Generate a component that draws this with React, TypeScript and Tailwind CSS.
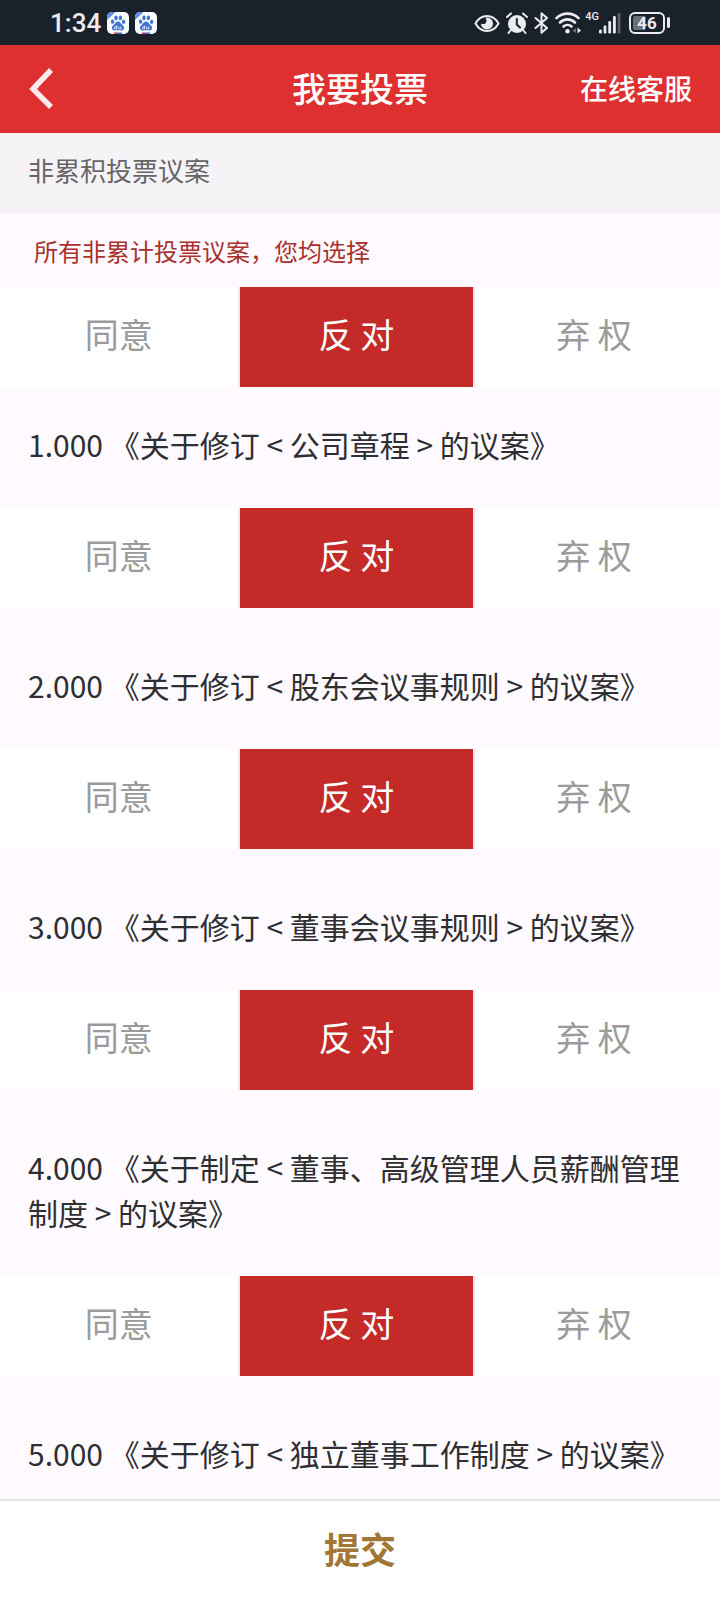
import { useState } from "react";

type Choice = "agree" | "against" | "abstain";

const OPTIONS: { value: Choice; label: string }[] = [
  { value: "agree", label: "同意" },
  { value: "against", label: "反 对" },
  { value: "abstain", label: "弃 权" },
];

const PROPOSALS = [
  "1.000 《关于修订 < 公司章程 > 的议案》",
  "2.000 《关于修订 < 股东会议事规则 > 的议案》",
  "3.000 《关于修订 < 董事会议事规则 > 的议案》",
  "4.000 《关于制定 < 董事、高级管理人员薪酬管理制度 > 的议案》",
  "5.000 《关于修订 < 独立董事工作制度 > 的议案》",
];

function PawIcon() {
  return (
    <svg width="22" height="22" viewBox="0 0 22 22" aria-hidden="true">
      <clipPath id="paw-clip">
        <rect width="22" height="22" rx="5" />
      </clipPath>
      <g clipPath="url(#paw-clip)">
        <rect width="22" height="22" fill="#fbfcff" />
        <path d="M0 0h8.500L0 8z" fill="#5b8fe4" />
        <g fill="#3d74d6">
          <ellipse cx="5.600" cy="9.600" rx="1.700" ry="2.200" transform="rotate(-12 5.600 9.600)" />
          <ellipse cx="9" cy="5.900" rx="1.700" ry="2.300" />
          <ellipse cx="13.400" cy="5.900" rx="1.700" ry="2.300" transform="rotate(8 13.400 5.900)" />
          <ellipse cx="16.600" cy="9.800" rx="1.700" ry="2.100" transform="rotate(12 16.600 9.800)" />
          <path d="M11 9.500c2.200 0 2.800 2 4.200 3.200 1.500 1.300 2.200 2.300 1.800 3.900-.4 1.700-2 2.200-3.500 1.900-1.800-.3-3.200-.3-5 0-1.500.3-3.100-.2-3.500-1.900-.4-1.600.3-2.600 1.800-3.900 1.400-1.200 2-3.200 4.200-3.200z" />
        </g>
        <path d="M9.600 13.500v3.500H8.400a1.100 1.100 0 010-2.200h1.200M11.600 14.500v1.700q0 .8.800.8h1.400v-2.500" fill="none" stroke="#fff" strokeWidth=".8" />
        <path d="M7 20.500h4V22H7z" fill="#d8383f" />
        <path d="M11 20.500h4V22h-4z" fill="#3b6fe0" />
      </g>
    </svg>
  );
}

function EyeIcon() {
  return (
    <svg width="26" height="22" viewBox="0 0 26 22" aria-hidden="true">
      <path d="M1.500 11.500C4 7 8 4 13 4s9 3 11.500 7.500C22 16 18 19 13 19S4 16 1.500 11.500z" fill="none" stroke="currentColor" strokeWidth="2" />
      <path d="M13 5.500a6 6 0 11-6 6c1.600 1.100 4.600.6 5.300-1.600.4-1.400 0-2.600-.9-4.100z" fill="currentColor" />
    </svg>
  );
}

function AlarmIcon() {
  return (
    <svg width="22" height="22" viewBox="0 0 22 22" aria-hidden="true">
      <circle cx="11" cy="12" r="9" fill="currentColor" />
      <path d="M1 5l4-3.500M21 5l-4-3.500M4.500 18.500l-2 2.500M17.500 18.500l2 2.500" stroke="currentColor" strokeWidth="2" strokeLinecap="round" />
      <path d="M10.800 7v5.500l3.200 3" fill="none" stroke="#19222b" strokeWidth="2" strokeLinecap="round" />
    </svg>
  );
}

function BluetoothIcon() {
  return (
    <svg width="15" height="22" viewBox="0 0 15 22" aria-hidden="true">
      <path d="M1.500 6l11.500 10-5.500 4.800V1.200L13 6 1.500 16" fill="none" stroke="currentColor" strokeWidth="2" strokeLinejoin="round" strokeLinecap="round" />
    </svg>
  );
}

function WifiIcon() {
  return (
    <svg width="26" height="22" viewBox="0 0 26 22" aria-hidden="true">
      <g fill="none" stroke="currentColor" strokeWidth="2.600" strokeLinecap="round">
        <path d="M1.500 6.200a15.500 15.500 0 0122 0" />
        <path d="M5 10.500a10.500 10.500 0 0115 0" />
        <path d="M8.500 14.500a6 6 0 018 0" />
      </g>
      <circle cx="12.500" cy="19.200" r="2.200" fill="currentColor" />
      <path d="M21 16l-3.500 2.500L21 21z" fill="#69717a" />
      <path d="M22.500 15.500l3.500 3-3.500 3z" fill="currentColor" />
    </svg>
  );
}

function SignalIcon() {
  return (
    <svg width="22" height="22" viewBox="0 0 22 22" aria-hidden="true">
      <g fill="currentColor">
        <rect y="17.500" width="2.800" height="4" rx="1.200" />
        <rect x="4.600" y="13.500" width="2.800" height="8" rx="1.200" />
        <rect x="9.300" y="9" width="2.800" height="12.500" rx="1.200" />
        <rect x="14" y="4" width="2.800" height="17.500" rx="1.200" />
      </g>
      <rect x="18.700" y="1" width="2.800" height="20.500" rx="1.200" fill="#59616a" />
    </svg>
  );
}

function StatusBar() {
  return (
    <div className="flex h-[45px] shrink-0 items-center justify-between bg-[#19222b] px-[50px] font-['Roboto',sans-serif] text-[#ebebf0]">
      <div className="flex items-center gap-[6px]">
        <span className="text-[26px] leading-[30px] font-medium">1:34</span>
        <PawIcon />
        <PawIcon />
      </div>
      <div className="flex items-center">
        <div className="flex items-center gap-[6px]">
          <EyeIcon />
          <AlarmIcon />
          <BluetoothIcon />
          <WifiIcon />
        </div>
        <span className="mb-3 ml-1 text-[11px] leading-[12px] font-medium">4G</span>
        <SignalIcon />
        <div className="ml-2 flex items-center gap-[2px]">
          <div className="flex h-[22px] w-[36px] items-center justify-center rounded-[6px] border-2 border-current bg-linear-to-r from-[#69717a] from-45% to-transparent to-45% bg-clip-content p-[2px]">
            <span className="text-[17px] leading-[16px] font-bold">46</span>
          </div>
          <div className="h-[11px] w-[3px] rounded-full bg-current" />
        </div>
      </div>
    </div>
  );
}

interface VoteOptionsProps {
  label: string;
  value: Choice;
  onChange: (value: Choice) => void;
}

function VoteOptions({ label, value, onChange }: VoteOptionsProps) {
  return (
    <div role="group" aria-label={label} className="grid h-[100px] grid-cols-[33%_33%_33%] bg-white">
      {OPTIONS.map((option) => (
        <button
          key={option.value}
          type="button"
          aria-pressed={option.value === value}
          onClick={() => onChange(option.value)}
          className={`border-x-2 pb-[6px] text-[34px] leading-[48px] ${
            option.value === value
              ? "border-[#fbe4e6] bg-[#c42a28] bg-clip-padding text-white"
              : "border-transparent text-[#9b9b9b]"
          }`}
        >
          {option.label}
        </button>
      ))}
    </div>
  );
}

export default function App() {
  const [votes, setVotes] = useState<Choice[]>(PROPOSALS.map(() => "against"));
  const [all, setAll] = useState<Choice>("against");

  const voteAll = (value: Choice) => {
    setAll(value);
    setVotes(PROPOSALS.map(() => value));
  };

  const voteOne = (index: number, value: Choice) => {
    setVotes(votes.map((vote, i) => (i === index ? value : vote)));
  };

  return (
    <div lang="zh-CN" className="flex h-screen flex-col bg-[#fefaff] font-['Noto_Sans_CJK_SC',sans-serif]">
      <StatusBar />

      <header className="grid h-[88px] shrink-0 grid-cols-3 items-center bg-[#df3031] px-[28px] pb-[2px] text-white">
        <button type="button" aria-label="返回" className="justify-self-start">
          <svg width="26" height="42" viewBox="0 0 26 42" aria-hidden="true">
            <path d="M23 3L5 22l18 18" fill="none" stroke="#fdeaec" strokeWidth="5.500" />
          </svg>
        </button>
        <h1 className="text-center text-[34px] leading-[48px] font-medium">我要投票</h1>
        <a href="#service" className="justify-self-end text-[28px] leading-[40px] font-medium">
          在线客服
        </a>
      </header>

      {/* Scrollable proposal list */}
      <main className="min-h-0 flex-1 overflow-y-auto [scrollbar-width:none]">
        <h2 className="h-20 bg-[#f6f3f7] px-[28px] pt-[17px] text-[26px] leading-[40px] text-[#666666]">
          非累积投票议案
        </h2>
        <p className="px-[34px] pt-[18px] pb-4 text-[24px] leading-[40px] text-[#a9302b]">
          所有非累计投票议案，您均选择
        </p>
        <VoteOptions label="全部议案" value={all} onChange={voteAll} />

        {PROPOSALS.map((title, i) => (
          <section key={title}>
            <h3 className={`px-[28px] pb-[41px] text-[30px] leading-[45px] text-[#2f2f31] ${i === 0 ? "pt-[35px]" : "pt-[55px]"}`}>
              {title}
            </h3>
            {i < PROPOSALS.length - 1 && (
              <VoteOptions label={title} value={votes[i]} onChange={(value) => voteOne(i, value)} />
            )}
          </section>
        ))}
      </main>

      <footer className="shrink-0 border-t-2 border-[#e3e4e8] bg-white">
        <button type="button" className="h-[99px] w-full pb-[6px] text-[36px] leading-[52px] font-bold text-[#a27633]">
          提交
        </button>
      </footer>
    </div>
  );
}
